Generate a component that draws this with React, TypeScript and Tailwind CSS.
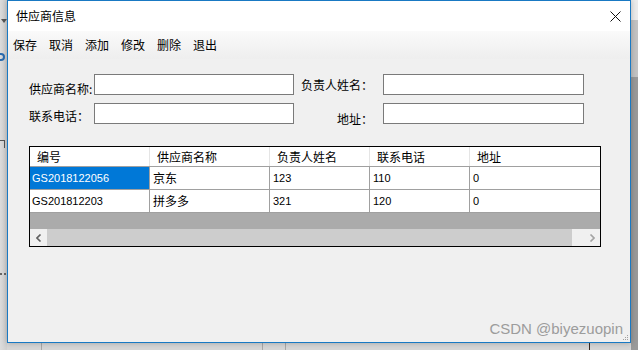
import React from "react";

const cjk = "font-['Noto_Sans_CJK_SC','Noto_Sans_CJK_JP',sans-serif]";
const lat = "font-['Liberation_Sans','Noto_Sans_CJK_SC',sans-serif]";

function Cell({
  w,
  children,
  sel,
  last,
  latin,
}: {
  w?: string;
  children?: React.ReactNode;
  sel?: boolean;
  last?: boolean;
  latin?: boolean;
}) {
  return (
    <div
      className={`${w ?? "flex-1"} h-full flex items-center pl-[2px] ${
        last ? "" : "border-r border-[#a0a0a0]"
      } ${sel ? "bg-[#0078d7] text-white" : "bg-white text-black"} ${
        latin ? `${lat} text-[11px]` : `${cjk} text-[12px]`
      }`}
    >
      {children}
    </div>
  );
}

function Head({ w, children, last }: { w?: string; children: React.ReactNode; last?: boolean }) {
  return (
    <div
      className={`${w ?? "flex-1"} h-full flex items-center pl-[7px] ${cjk} text-[12px] text-black ${
        last ? "" : "border-r border-[#e5e5e5]"
      }`}
    >
      {children}
    </div>
  );
}

export default function App() {
  const rows = [
    { id: "GS2018122056", name: "京东", p: "123", tel: "110", addr: "0", sel: true },
    { id: "GS201812203", name: "拼多多", p: "321", tel: "120", addr: "0", sel: false },
  ];
  return (
    <div className="relative w-[638px] h-[350px] overflow-hidden bg-[#d6d6d6]">
      {/* desktop background bits */}
      <div className="absolute left-0 top-0 w-[7px] h-[350px] bg-gradient-to-r from-[#dcdcdc] to-[#cfcfcf]" />
      <div className="absolute left-[1px] top-[19px] w-0 h-0 border-l-[3px] border-r-[3px] border-t-[4px] border-l-transparent border-r-transparent border-t-[#555]" />
      <div className="absolute left-[-4px] top-[53px] w-[9px] h-[8px] rounded-full border-[2px] border-[#2a6cb0]" />
      <div className="absolute left-0 top-[140px] w-[5px] h-[8px] border-r border-t border-[#555]" />
      <div className="absolute left-0 top-[273px] w-[6px] h-[2px] border-t-2 border-dotted border-[#666]" />
      <div className="absolute right-0 top-0 w-[7px] h-[20px] bg-[#ececec]" />
      <div className="absolute right-0 top-[20px] w-[7px] h-[57px] bg-[#c3c3c3]" />
      <div className="absolute right-0 top-[77px] w-[7px] h-[273px] bg-[#9a9a9a]" />
      <div className="absolute left-[41px] top-[343px] w-px h-[7px] bg-[#a8a8a8]" />
      <div className="absolute left-[262px] top-[343px] w-px h-[7px] bg-[#a8a8a8]" />
      <div className="absolute left-[285px] top-[343px] w-px h-[7px] bg-[#a8a8a8]" />
      <div className="absolute left-[589px] top-[343px] w-px h-[7px] bg-[#3a2a20]" />

      {/* window */}
      <div className="absolute left-[7px] top-0 w-[624px] h-[343px] border border-[#1979c3] bg-[#f0f0f0] flex flex-col shadow-[0_0_6px_rgba(0,0,0,0.25)]">
        {/* title bar */}
        <div className="h-[30px] bg-white flex items-center justify-between shrink-0">
          <span className={`pl-[8px] text-[12px] text-black ${cjk}`}>供应商信息</span>
          <svg width="11" height="11" viewBox="0 0 11 11" className="mr-[9px]">
            <path d="M0.5 0.5 L10.5 10.5 M10.5 0.5 L0.5 10.5" stroke="#111" strokeWidth="1" fill="none" />
          </svg>
        </div>
        {/* menu strip */}
        <div className="h-[28px] shrink-0 bg-gradient-to-b from-[#fafafa] to-[#eeeeee] flex items-center pl-[5px] gap-[12px] pb-[1px]">
          {["保存", "取消", "添加", "修改", "删除", "退出"].map((t) => (
            <span key={t} className={`text-[12px] text-black ${cjk}`}>
              {t}
            </span>
          ))}
        </div>

        {/* form */}
        <div className="pl-[21px] mt-[15px]">
          <div className="flex items-center h-[21px]">
            <span className={`w-[65px] text-[12px] text-black translate-y-[4px] ${cjk}`}>供应商名称:</span>
            <div className="w-[200px] h-[21px] border border-[#7a7a7a] bg-white" />
            <span className={`w-[89px] text-right pr-[10px] text-[12px] text-black ${cjk}`}>负责人姓名：</span>
            <div className="w-[201px] h-[21px] border border-[#7a7a7a] bg-white" />
          </div>
          <div className="flex items-center h-[21px] mt-[8px]">
            <span className={`w-[65px] text-[12px] text-black translate-y-[2px] ${cjk}`}>联系电话：</span>
            <div className="w-[200px] h-[21px] border border-[#7a7a7a] bg-white" />
            <span className={`w-[89px] text-right pr-[10px] text-[12px] text-black translate-y-[5px] ${cjk}`}>地址：</span>
            <div className="w-[201px] h-[21px] border border-[#7a7a7a] bg-white" />
          </div>

          {/* grid */}
          <div className="mt-[22px] w-[572px] h-[101px] border border-black flex flex-col">
            <div className="h-[20px] flex bg-white border-b border-[#a0a0a0]">
              <Head w="w-[120px]">编号</Head>
              <Head w="w-[120px]">供应商名称</Head>
              <Head w="w-[100px]">负责人姓名</Head>
              <Head w="w-[100px]">联系电话</Head>
              <Head last>地址</Head>
            </div>
            {rows.map((r) => (
              <div key={r.id} className="h-[23px] flex border-b border-[#a0a0a0]">
                <Cell w="w-[120px]" sel={r.sel} latin>
                  {r.id}
                </Cell>
                <Cell w="w-[120px]">
                  <span className="pl-[1px]">{r.name}</span>
                </Cell>
                <Cell w="w-[100px]" latin>
                  <span className="pl-[1px]">{r.p}</span>
                </Cell>
                <Cell w="w-[100px]" latin>
                  <span className="pl-[1px]">{r.tel}</span>
                </Cell>
                <Cell last latin>
                  <span className="pl-[1px]">{r.addr}</span>
                </Cell>
              </div>
            ))}
            <div className="flex-1 bg-[#ababab]" />
            <div className="h-[17px] flex bg-[#f0f0f0]">
              <div className="w-[17px] h-full flex items-center justify-center">
                <svg width="6" height="8" viewBox="0 0 6 8">
                  <path d="M4.5 0.5 L1 4 L4.5 7.5" stroke="#606060" strokeWidth="1.6" fill="none" />
                </svg>
              </div>
              <div className="w-[525px] h-full bg-[#cdcdcd]" />
              <div className="flex-1" />
              <div className="w-[17px] h-full flex items-center justify-center">
                <svg width="6" height="8" viewBox="0 0 6 8">
                  <path d="M1.5 0.5 L5 4 L1.5 7.5" stroke="#a3a3a3" strokeWidth="1.6" fill="none" />
                </svg>
              </div>
            </div>
          </div>
        </div>

        {/* watermark */}
        <div className={`absolute right-[7px] bottom-[2px] text-[15px] text-[#9c9c9c] ${lat}`}>CSDN @biyezuopin</div>
        <div className="absolute right-[2px] bottom-[2px] grid grid-cols-3 gap-[1px]">
          {[0, 1, 2, 3, 4, 5, 6, 7, 8].map((i) => (
            <div key={i} className={`w-[1px] h-[1px] ${i === 0 || i === 1 || i === 3 ? "bg-transparent" : "bg-[#a0a0a0]"}`} />
          ))}
        </div>
      </div>
    </div>
  );
}
